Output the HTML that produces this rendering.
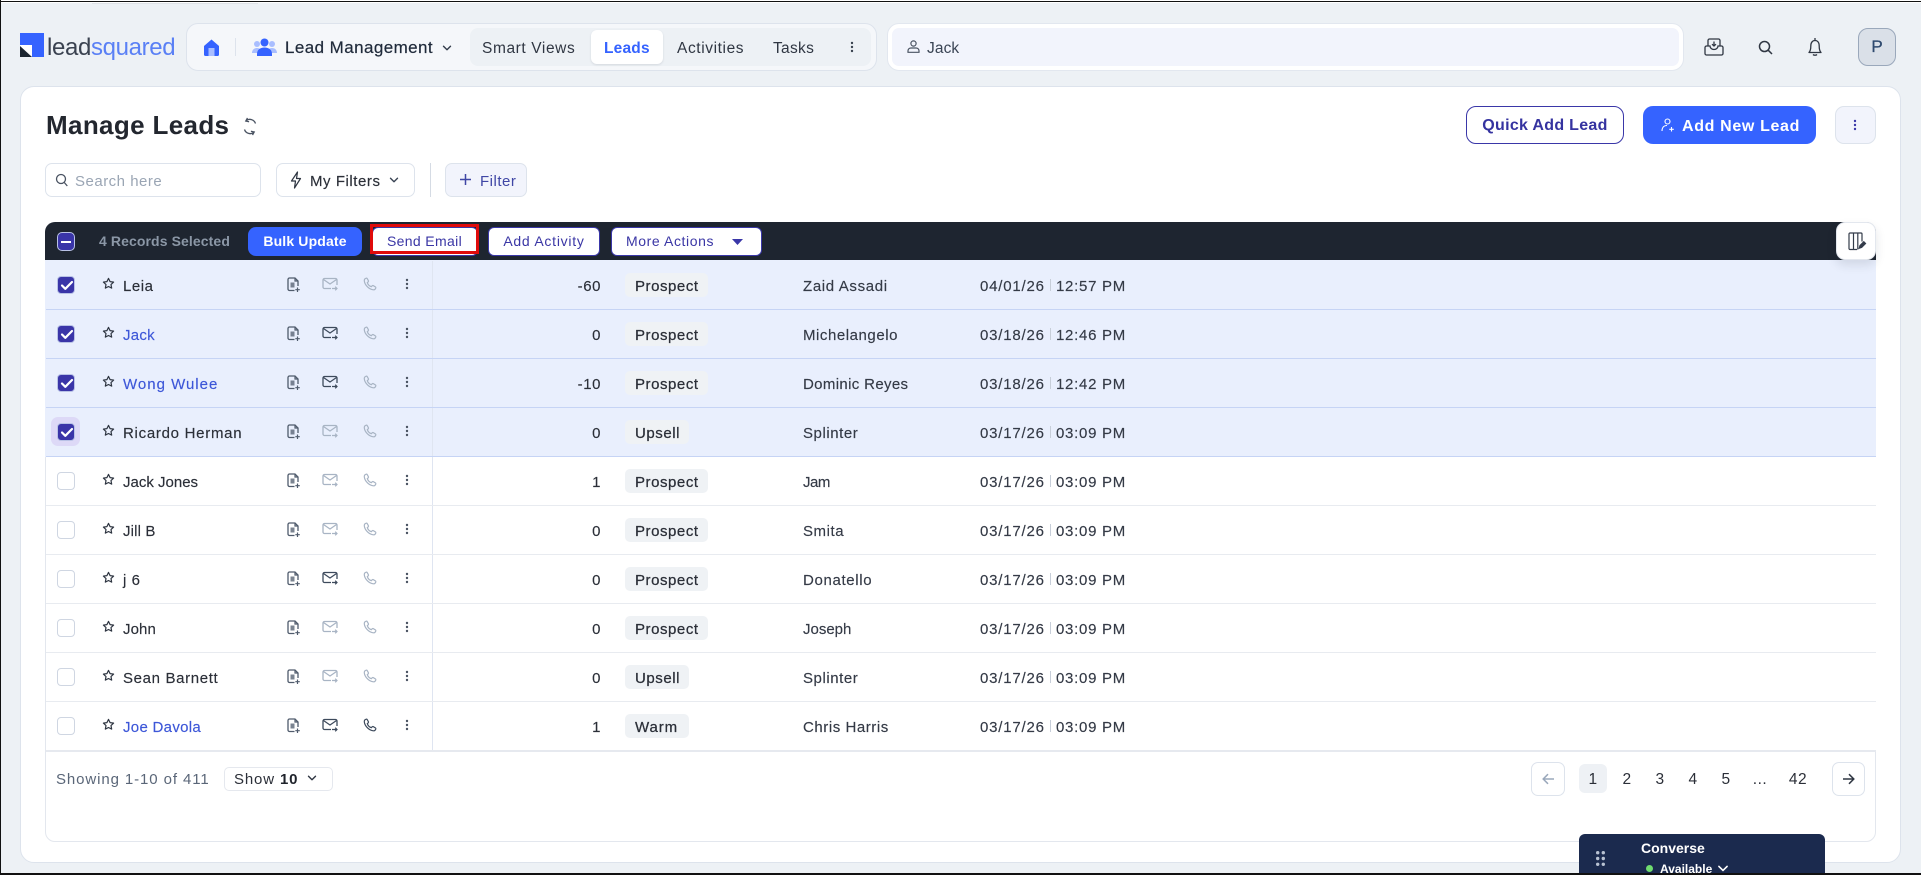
<!DOCTYPE html>
<html><head><meta charset="utf-8"><title>Manage Leads</title>
<style>
html,body{margin:0;padding:0;width:1921px;height:875px;overflow:hidden;background:#edf1f5}
body{position:relative;font-family:"Liberation Sans",sans-serif;color:#2b2f38}
div,span,svg{position:absolute;box-sizing:border-box}
.t{white-space:nowrap}
b{font-weight:700}
.r{left:46px;width:1830px;height:49px;background:#fff;border-bottom:1px solid #e8ebf0;box-shadow:-1px 0 0 #e3e7ee}
.s{background:#e9effd;border-bottom:1px solid #c6d4f5;box-shadow:-1px 0 0 #e9effd}
.r .t{top:2px;line-height:48px;font-size:15px;letter-spacing:.55px;-webkit-text-stroke:.15px currentColor}
.cb{left:11px;top:15px;width:18px;height:18px;border-radius:4px;background:#fff;border:1px solid #cfd6e2}
.s .cb,.cb.on{background:#3a35a8;border:1px solid #b9c2e6}
.cb svg{left:2px;top:3px}
.n{left:77px;color:#2b2f38}
.l{color:#3d57d8}
.sc{right:1275px;text-align:right}
.p{left:579px;top:12px;height:24px;border-radius:5px;background:#eff2f5;font-size:15px}
.p1{width:83px}.p2{width:64px}.p3{width:64px}
.r .pt{left:589px;color:#2b2f38;-webkit-text-stroke:.25px currentColor}
.o{left:757px;color:#343a46}
.r .d{left:934px;letter-spacing:.8px;color:#343a46}
.sep{left:1004px;top:18px;width:1px;height:12px;background:#c7ced9}
.r .tm{left:1010px;letter-spacing:.72px;color:#343a46}
.v{left:386px;top:0;width:1px;height:48px;background:#dfe5f1}
.i{top:16px}
.i.dt{top:17px}
.btn{border-radius:8px}
.pg{top:763px;line-height:34px;font-size:15.500px;width:30px;text-align:center;color:#2b2f38;letter-spacing:.5px}
</style></head>
<body>
<svg width="0" height="0" style="left:0;top:0">
<defs>
<symbol id="star" viewBox="0 0 14 14"><path d="M7 1.500l1.700 3.500 3.800.5-2.800 2.700.7 3.800L7 10.200 3.600 12l.7-3.800L1.500 5.500l3.800-.5z" fill="none" stroke="currentColor" stroke-width="1.300" stroke-linejoin="round"/></symbol>
<symbol id="doc" viewBox="0 0 16 16"><path d="M8.500 13.500H3.500a1.500 1.500 0 0 1-1.500-1.500V2.500A1.500 1.500 0 0 1 3.500 1h5.500l3 3v5" fill="none" stroke="currentColor" stroke-width="1.300"/><path d="M9 1v3h3M11.500 10.500v4.500M9.300 12.700h4.500" fill="none" stroke="currentColor" stroke-width="1.200"/><rect x="4.500" y="5.500" width="4" height="5" fill="currentColor" opacity=".75"/></symbol>
<symbol id="mail" viewBox="0 0 16 14"><path d="M9 11.500H2.500A1.500 1.500 0 0 1 1 10V3a1.500 1.500 0 0 1 1.500-1.500h11A1.500 1.500 0 0 1 15 3v5" fill="none" stroke="currentColor" stroke-width="1.300"/><path d="M1.500 2.500L8 7l6.500-4.500M10 11.500h5M13.200 9.700l1.800 1.800-1.800 1.800" fill="none" stroke="currentColor" stroke-width="1.200"/></symbol>
<symbol id="ph" viewBox="0 0 14 14"><path d="M3.200 1.200c-1 .3-2 1.300-1.900 2.600.4 4.200 4.700 8.600 8.900 9 1.300.1 2.300-.9 2.600-1.900.1-.4 0-.7-.3-.9L10.300 8.600c-.3-.2-.7-.1-1 .1l-1 1c-1.800-.6-3.400-2.200-4-4l1-1c.2-.3.3-.7.1-1L4.100 1.500c-.2-.3-.5-.4-.9-.3z" fill="none" stroke="currentColor" stroke-width="1.200"/></symbol>
<symbol id="dots" viewBox="0 0 4 12"><circle cx="2" cy="2" r="1.200" fill="currentColor"/><circle cx="2" cy="6" r="1.200" fill="currentColor"/><circle cx="2" cy="10" r="1.200" fill="currentColor"/></symbol>
<symbol id="chk" viewBox="0 0 14 11"><path d="M2 5.500l3.300 3.300L12 2" fill="none" stroke="#fff" stroke-width="2.200" stroke-linecap="round" stroke-linejoin="round"/></symbol>
<symbol id="chev" viewBox="0 0 10 6"><path d="M1.500 1.200L5 4.700l3.500-3.500" fill="none" stroke="currentColor" stroke-width="1.400" stroke-linecap="round" stroke-linejoin="round"/></symbol>
</defs></svg>

<div style="left:0;top:0;width:1921px;height:3px;background:#fff"></div>
<div style="left:0;top:1px;width:1921px;height:1px;background:#111"></div>
<div style="left:92px;top:3px;width:166px;height:1px;background:#dfe3e8"></div>
<div style="left:0;top:0;width:1px;height:875px;background:#111"></div>

<!-- logo -->
<div style="left:20px;top:33px;width:23.500px;height:24px;background:#3563ff"></div>
<div style="left:20px;top:45px;width:12px;height:12px;background:#fff"></div>
<svg style="left:20px;top:46px" width="12" height="11"><path d="M0 0L12 11H0z" fill="#1c2530"/></svg>
<div class="t" style="left:47px;top:30px;line-height:36px;font-size:24px;letter-spacing:-.35px;color:#3a4250">lead<span style="position:static;color:#5a80f5">squared</span></div>

<!-- nav -->
<div style="left:186px;top:23px;width:691px;height:48px;background:#f5f7fa;border:1px solid #dde3ec;border-radius:12px"></div>
<svg style="left:203px;top:39px" width="17" height="17" viewBox="0 0 17 17"><path d="M8.500 0.500L16 7v8.500a1.500 1.500 0 0 1-1.500 1.500h-12A1.500 1.500 0 0 1 1 15.500V7z" fill="#3563ff"/><rect x="5.500" y="9" width="6" height="8" fill="#a9beff"/></svg>
<div style="left:235px;top:38px;width:1px;height:18px;background:#dde3ec"></div>
<svg style="left:252px;top:38px" width="25" height="18" viewBox="0 0 25 18"><circle cx="5" cy="6" r="3" fill="#a9beff"/><circle cx="20" cy="6" r="3" fill="#a9beff"/><path d="M0 15c0-3 2-5 5-5s5 2 5 5zM15 15c0-3 2-5 5-5s5 2 5 5z" fill="#a9beff"/><circle cx="12.500" cy="4.500" r="4" fill="#3563ff"/><path d="M5 18v-2c0-4 3-6.500 7.500-6.500S20 12 20 16v2z" fill="#3563ff"/></svg>
<div class="t" style="left:285px;top:30px;line-height:36px;font-size:17px;letter-spacing:.42px;color:#1f2a3a;-webkit-text-stroke:.2px #1f2a3a">Lead Management</div>
<svg style="left:442px;top:45px;color:#333c4a" width="10" height="6"><use href="#chev"/></svg>
<div style="left:470px;top:28px;width:401px;height:38px;background:#edf1f5;border-radius:8px"></div>
<div style="left:591px;top:30px;width:72px;height:34px;background:#fff;border-radius:6px;box-shadow:0 1px 2px rgba(30,40,60,.12)"></div>
<div class="t" style="left:482px;top:31px;line-height:36px;font-size:15.500px;letter-spacing:.6px;color:#2f3642">Smart Views</div>
<div class="t" style="left:604px;top:31px;line-height:36px;font-size:15.500px;font-weight:700;letter-spacing:.2px;color:#3563ff">Leads</div>
<div class="t" style="left:677px;top:31px;line-height:36px;font-size:15.500px;letter-spacing:.6px;color:#2f3642">Activities</div>
<div class="t" style="left:773px;top:31px;line-height:36px;font-size:15.500px;letter-spacing:.3px;color:#2f3642">Tasks</div>
<svg style="left:850px;top:41px;color:#39424f" width="4" height="12"><use href="#dots"/></svg>

<!-- global search -->
<div style="left:887px;top:23px;width:797px;height:48px;background:#fff;border:1px solid #e2e7ef;border-radius:12px"></div>
<div style="left:892px;top:28px;width:787px;height:38px;background:#f2f4fc;border-radius:7px"></div>
<svg style="left:907px;top:40px" width="13" height="13" viewBox="0 0 13 13"><circle cx="6.500" cy="3.500" r="2.600" fill="none" stroke="#4a5362" stroke-width="1.200"/><path d="M1 12.300v-1.300c0-2 1.500-3 3-3h5c1.500 0 3 1 3 3v1.300z" fill="none" stroke="#4a5362" stroke-width="1.200"/></svg>
<div class="t" style="left:927px;top:31px;line-height:36px;font-size:15.500px;letter-spacing:.1px;color:#3a4454">Jack</div>

<!-- top right icons -->
<svg style="left:1704px;top:38px" width="20" height="18" viewBox="0 0 20 18" fill="none" stroke="#2f3642" stroke-width="1.300"><path d="M4 8V2.500A1.500 1.500 0 0 1 5.500 1h9A1.500 1.500 0 0 1 16 2.500V8"/><path d="M1 9.500A1.500 1.500 0 0 1 2.500 8H6c0 2 1.800 3.500 4 3.500S14 10 14 8h3.500A1.500 1.500 0 0 1 19 9.500v6a1.500 1.500 0 0 1-1.500 1.500h-15A1.500 1.500 0 0 1 1 15.500z"/><path d="M10 3.500v4.500M8 6.200L10 8l2-1.800"/></svg>
<svg style="left:1758px;top:40px" width="15" height="15" viewBox="0 0 15 15" fill="none" stroke="#2f3642" stroke-width="1.500"><circle cx="6.500" cy="6.500" r="5"/><path d="M10.300 10.300L14 14"/></svg>
<svg style="left:1807px;top:37px" width="16" height="20" viewBox="0 0 16 20" fill="none" stroke="#2f3642" stroke-width="1.300"><path d="M8 1v2M2 15.500c1.500-1.500 1.800-3 1.800-6.500C3.800 5.500 5.500 3.500 8 3.500s4.200 2 4.200 5.500c0 3.500.3 5 1.800 6.500z" stroke-linejoin="round"/><path d="M6 17.500c1 1 3 1 4 0"/></svg>
<div class="t" style="left:1858px;top:28px;width:38px;height:38px;background:#dae0e8;border:1px solid #9aa8bb;border-radius:10px;text-align:center;line-height:36px;font-size:17px;color:#2f4a6f;-webkit-text-stroke:.3px #2f4a6f">P</div>

<!-- card -->
<div style="left:20px;top:86px;width:1881px;height:777px;background:#fff;border:1px solid #dde3ec;border-radius:14px"></div>
<div class="t" style="left:46px;top:105px;line-height:40px;font-size:26px;font-weight:700;letter-spacing:.35px;color:#23272f">Manage Leads</div>
<svg style="left:242px;top:117px" width="16" height="19" viewBox="0 0 16 19" fill="none" stroke="#4a5362" stroke-width="1.300"><path d="M13.500 6.500A6 6 0 0 0 4 3.700M2.500 12.500A6 6 0 0 0 12 15.300"/><path d="M5.500 1L3.800 4l3.300.7M10.500 18l1.700-3-3.300-.7"/></svg>

<div class="t" style="left:1466px;top:106px;width:158px;height:38px;border:1px solid #3a37a8;border-radius:10px;text-align:center;line-height:38px;font-size:16px;font-weight:700;letter-spacing:.3px;color:#3533a0">Quick Add Lead</div>
<div style="left:1643px;top:106px;width:173px;height:38px;background:#3563ff;border-radius:10px"></div>
<svg style="left:1661px;top:118px" width="14" height="14" viewBox="0 0 14 14" fill="none" stroke="#fff" stroke-width="1.100"><circle cx="6.500" cy="3.500" r="2.500"/><path d="M1 13c0-3.500 2-5.500 5-5.500M10.500 9v4.500M8.300 11.300h4.500"/></svg>
<div class="t" style="left:1682px;top:108px;line-height:38px;font-size:16px;font-weight:700;letter-spacing:.65px;color:#fff">Add New Lead</div>
<div style="left:1835px;top:106px;width:41px;height:38px;background:#f2f4fc;border:1px solid #dde3ec;border-radius:9px"></div>
<svg style="left:1853px;top:119px;color:#3a37a8" width="4" height="12"><use href="#dots"/></svg>

<!-- filters -->
<div style="left:45px;top:163px;width:216px;height:34px;background:#fff;border:1px solid #dde3ec;border-radius:7px"></div>
<svg style="left:55px;top:173px" width="13" height="14" viewBox="0 0 13 14" fill="none" stroke="#4a5362" stroke-width="1.300"><circle cx="6" cy="6" r="4.500"/><path d="M9.300 9.500l3 3.500"/></svg>
<div class="t" style="left:75px;top:165px;line-height:34px;font-size:15px;letter-spacing:.5px;color:#9aa5b4">Search here</div>
<div style="left:276px;top:163px;width:139px;height:34px;background:#fff;border:1px solid #dde3ec;border-radius:7px"></div>
<svg style="left:290px;top:171px" width="12" height="18" viewBox="0 0 12 18" fill="none" stroke="#2f3642" stroke-width="1.200" stroke-linejoin="round"><path d="M7.500 1L1.500 10h4l-1 7 6-9.500h-4z"/></svg>
<div class="t" style="left:310px;top:165px;line-height:34px;font-size:15px;letter-spacing:.55px;color:#2b2f38;-webkit-text-stroke:.15px #2b2f38">My Filters</div>
<svg style="left:389px;top:177px;color:#3a4454" width="10" height="6"><use href="#chev"/></svg>
<div style="left:430px;top:163px;width:1px;height:34px;background:#d5dbe4"></div>
<div style="left:445px;top:163px;width:82px;height:34px;background:#f2f4fc;border:1px solid #dde3ec;border-radius:7px"></div>
<svg style="left:459px;top:173px" width="13" height="13" fill="none" stroke="#3f46a5" stroke-width="1.500"><path d="M6.500 1v11M1 6.500h11"/></svg>
<div class="t" style="left:480px;top:165px;line-height:34px;font-size:15px;letter-spacing:.5px;color:#3f46a5">Filter</div>

<!-- table -->
<div style="left:45px;top:222px;width:1831px;height:620px;background:#fff;border:1px solid #e3e7ee;border-radius:10px"></div>
<div style="left:45px;top:222px;width:1831px;height:38px;background:#1e2530;border-radius:10px 10px 0 0"></div>
<div style="left:45px;top:260px;width:1831px;height:1px;background:#e9effd"></div>
<div style="left:57px;top:232px;width:18px;height:19px;background:#3a35a8;border:1px solid #b9c2e6;border-radius:5px"></div>
<div style="left:61px;top:240.500px;width:10px;height:2px;background:#fff"></div>
<div class="t" style="left:99px;top:222px;line-height:38px;font-size:14px;font-weight:700;letter-spacing:.1px;color:#8b97a6">4 Records Selected</div>
<div class="t" style="left:248px;top:227px;width:114px;height:29px;background:#3563ff;border-radius:8px;text-align:center;line-height:29px;font-size:14px;font-weight:700;letter-spacing:.15px;color:#fff">Bulk Update</div>
<div style="left:372px;top:227px;width:106px;height:29px;background:#fff;border:1px solid #3a37a8;border-radius:6px"></div>
<div class="t" style="left:370px;top:224px;width:109px;height:30px;border:3px solid #e00b0b;text-align:center;line-height:28px;font-size:14px;letter-spacing:.35px;color:#3a36a5">Send Email</div>
<div class="t" style="left:488px;top:227px;width:112px;height:29px;background:#fff;border:1px solid #3a37a8;border-radius:6px;text-align:center;line-height:27px;font-size:14px;letter-spacing:.75px;color:#3a36a5">Add Activity</div>
<div style="left:611px;top:227px;width:151px;height:29px;background:#fff;border:1px solid #3a37a8;border-radius:6px"></div>
<div class="t" style="left:626px;top:227px;line-height:29px;font-size:14px;letter-spacing:.6px;color:#3a36a5">More Actions</div>
<svg style="left:732px;top:239px" width="11" height="6"><path d="M0 0h11L5.500 6z" fill="#3a37a8"/></svg>

<!-- rows -->
<div class="r s" style="top:261px"><div class="cb"><svg width="14" height="11"><use href="#chk"/></svg></div><svg class="i" style="left:56px;color:#2f3642" width="13" height="13"><use href="#star"/></svg><div class="t n">Leia</div><svg class="i" style="left:240px;color:#4f5b6c" width="16" height="16"><use href="#doc"/></svg><svg class="i" style="left:276px;color:#a8b4c4" width="16" height="14"><use href="#mail"/></svg><svg class="i" style="left:317px;color:#a8b4c4" width="14" height="14"><use href="#ph"/></svg><svg class="i dt" style="left:359px;color:#4a5362" width="4" height="12"><use href="#dots"/></svg><div class="v"></div><div class="t sc">-60</div><div class="p p1"></div><div class="t pt">Prospect</div><div class="t o" style="letter-spacing:.65px">Zaid Assadi</div><div class="t d">04/01/26</div><div class="sep"></div><div class="t tm">12:57 PM</div></div>

<div class="r s" style="top:310px"><div class="cb"><svg width="14" height="11"><use href="#chk"/></svg></div><svg class="i" style="left:56px;color:#2f3642" width="13" height="13"><use href="#star"/></svg><div class="t n l" style="letter-spacing:.25px">Jack</div><svg class="i" style="left:240px;color:#4f5b6c" width="16" height="16"><use href="#doc"/></svg><svg class="i" style="left:276px;color:#3d4a5c" width="16" height="14"><use href="#mail"/></svg><svg class="i" style="left:317px;color:#a8b4c4" width="14" height="14"><use href="#ph"/></svg><svg class="i dt" style="left:359px;color:#4a5362" width="4" height="12"><use href="#dots"/></svg><div class="v"></div><div class="t sc">0</div><div class="p p1"></div><div class="t pt">Prospect</div><div class="t o">Michelangelo</div><div class="t d">03/18/26</div><div class="sep"></div><div class="t tm">12:46 PM</div></div>

<div class="r s" style="top:359px"><div class="cb"><svg width="14" height="11"><use href="#chk"/></svg></div><svg class="i" style="left:56px;color:#2f3642" width="13" height="13"><use href="#star"/></svg><div class="t n l" style="letter-spacing:1px">Wong Wulee</div><svg class="i" style="left:240px;color:#4f5b6c" width="16" height="16"><use href="#doc"/></svg><svg class="i" style="left:276px;color:#3d4a5c" width="16" height="14"><use href="#mail"/></svg><svg class="i" style="left:317px;color:#a8b4c4" width="14" height="14"><use href="#ph"/></svg><svg class="i dt" style="left:359px;color:#4a5362" width="4" height="12"><use href="#dots"/></svg><div class="v"></div><div class="t sc">-10</div><div class="p p1"></div><div class="t pt">Prospect</div><div class="t o" style="letter-spacing:.35px">Dominic Reyes</div><div class="t d">03/18/26</div><div class="sep"></div><div class="t tm">12:42 PM</div></div>

<div class="r s" style="top:408px"><div style="left:5px;top:9px;width:29px;height:29px;background:#ddd9f7;border-radius:7px"></div><div class="cb"><svg width="14" height="11"><use href="#chk"/></svg></div><svg class="i" style="left:56px;color:#2f3642" width="13" height="13"><use href="#star"/></svg><div class="t n" style="letter-spacing:.72px">Ricardo Herman</div><svg class="i" style="left:240px;color:#4f5b6c" width="16" height="16"><use href="#doc"/></svg><svg class="i" style="left:276px;color:#a8b4c4" width="16" height="14"><use href="#mail"/></svg><svg class="i" style="left:317px;color:#a8b4c4" width="14" height="14"><use href="#ph"/></svg><svg class="i dt" style="left:359px;color:#4a5362" width="4" height="12"><use href="#dots"/></svg><div class="v"></div><div class="t sc">0</div><div class="p p3"></div><div class="t pt">Upsell</div><div class="t o">Splinter</div><div class="t d">03/17/26</div><div class="sep"></div><div class="t tm">03:09 PM</div></div>

<div class="r" style="top:457px"><div class="cb"></div><svg class="i" style="left:56px;color:#2f3642" width="13" height="13"><use href="#star"/></svg><div class="t n" style="letter-spacing:0">Jack Jones</div><svg class="i" style="left:240px;color:#4f5b6c" width="16" height="16"><use href="#doc"/></svg><svg class="i" style="left:276px;color:#a8b4c4" width="16" height="14"><use href="#mail"/></svg><svg class="i" style="left:317px;color:#a8b4c4" width="14" height="14"><use href="#ph"/></svg><svg class="i dt" style="left:359px;color:#4a5362" width="4" height="12"><use href="#dots"/></svg><div class="v"></div><div class="t sc">1</div><div class="p p1"></div><div class="t pt">Prospect</div><div class="t o" style="letter-spacing:-.5px">Jam</div><div class="t d">03/17/26</div><div class="sep"></div><div class="t tm">03:09 PM</div></div>

<div class="r" style="top:506px"><div class="cb"></div><svg class="i" style="left:56px;color:#2f3642" width="13" height="13"><use href="#star"/></svg><div class="t n" style="letter-spacing:.15px">Jill B</div><svg class="i" style="left:240px;color:#4f5b6c" width="16" height="16"><use href="#doc"/></svg><svg class="i" style="left:276px;color:#a8b4c4" width="16" height="14"><use href="#mail"/></svg><svg class="i" style="left:317px;color:#a8b4c4" width="14" height="14"><use href="#ph"/></svg><svg class="i dt" style="left:359px;color:#4a5362" width="4" height="12"><use href="#dots"/></svg><div class="v"></div><div class="t sc">0</div><div class="p p1"></div><div class="t pt">Prospect</div><div class="t o">Smita</div><div class="t d">03/17/26</div><div class="sep"></div><div class="t tm">03:09 PM</div></div>

<div class="r" style="top:555px"><div class="cb"></div><svg class="i" style="left:56px;color:#2f3642" width="13" height="13"><use href="#star"/></svg><div class="t n">j 6</div><svg class="i" style="left:240px;color:#4f5b6c" width="16" height="16"><use href="#doc"/></svg><svg class="i" style="left:276px;color:#3d4a5c" width="16" height="14"><use href="#mail"/></svg><svg class="i" style="left:317px;color:#a8b4c4" width="14" height="14"><use href="#ph"/></svg><svg class="i dt" style="left:359px;color:#4a5362" width="4" height="12"><use href="#dots"/></svg><div class="v"></div><div class="t sc">0</div><div class="p p1"></div><div class="t pt">Prospect</div><div class="t o" style="letter-spacing:.65px">Donatello</div><div class="t d">03/17/26</div><div class="sep"></div><div class="t tm">03:09 PM</div></div>

<div class="r" style="top:604px"><div class="cb"></div><svg class="i" style="left:56px;color:#2f3642" width="13" height="13"><use href="#star"/></svg><div class="t n" style="letter-spacing:.1px">John</div><svg class="i" style="left:240px;color:#4f5b6c" width="16" height="16"><use href="#doc"/></svg><svg class="i" style="left:276px;color:#a8b4c4" width="16" height="14"><use href="#mail"/></svg><svg class="i" style="left:317px;color:#a8b4c4" width="14" height="14"><use href="#ph"/></svg><svg class="i dt" style="left:359px;color:#4a5362" width="4" height="12"><use href="#dots"/></svg><div class="v"></div><div class="t sc">0</div><div class="p p1"></div><div class="t pt">Prospect</div><div class="t o" style="letter-spacing:0">Joseph</div><div class="t d">03/17/26</div><div class="sep"></div><div class="t tm">03:09 PM</div></div>

<div class="r" style="top:653px"><div class="cb"></div><svg class="i" style="left:56px;color:#2f3642" width="13" height="13"><use href="#star"/></svg><div class="t n" style="letter-spacing:.65px">Sean Barnett</div><svg class="i" style="left:240px;color:#4f5b6c" width="16" height="16"><use href="#doc"/></svg><svg class="i" style="left:276px;color:#a8b4c4" width="16" height="14"><use href="#mail"/></svg><svg class="i" style="left:317px;color:#a8b4c4" width="14" height="14"><use href="#ph"/></svg><svg class="i dt" style="left:359px;color:#4a5362" width="4" height="12"><use href="#dots"/></svg><div class="v"></div><div class="t sc">0</div><div class="p p2"></div><div class="t pt">Upsell</div><div class="t o">Splinter</div><div class="t d">03/17/26</div><div class="sep"></div><div class="t tm">03:09 PM</div></div>

<div class="r" style="top:702px;border-bottom:2px solid #e6e9ef;height:50px"><div class="cb"></div><svg class="i" style="left:56px;color:#2f3642" width="13" height="13"><use href="#star"/></svg><div class="t n l" style="letter-spacing:.3px">Joe Davola</div><svg class="i" style="left:240px;color:#4f5b6c" width="16" height="16"><use href="#doc"/></svg><svg class="i" style="left:276px;color:#3d4a5c" width="16" height="14"><use href="#mail"/></svg><svg class="i" style="left:317px;color:#3d4a5c" width="14" height="14"><use href="#ph"/></svg><svg class="i dt" style="left:359px;color:#4a5362" width="4" height="12"><use href="#dots"/></svg><div class="v"></div><div class="t sc">1</div><div class="p p3"></div><div class="t pt" style="letter-spacing:.9px">Warm</div><div class="t o">Chris Harris</div><div class="t d">03/17/26</div><div class="sep"></div><div class="t tm">03:09 PM</div></div>

<!-- column edit -->
<div style="left:1836px;top:222px;width:40px;height:38px;background:#fff;border:1px solid #e3e7ee;border-radius:9px;box-shadow:0 5px 10px rgba(30,40,60,.12)"></div>
<svg style="left:1848px;top:232px" width="19" height="19" viewBox="0 0 19 19" fill="none" stroke="#343c4a" stroke-width="1.200"><path d="M9 17.500H2a1 1 0 0 1-1-1V2a1 1 0 0 1 1-1h11a1 1 0 0 1 1 1v7.500M5.500 1v16.500M9.800 1v16.500"/><path d="M11 16.500l.8-3 4-4 2 2-4 4z" fill="#343c4a" stroke-width=".8"/></svg>

<!-- footer -->
<div class="t" style="left:56px;top:765px;line-height:30px;font-size:15px;letter-spacing:.9px;color:#5a6678">Showing 1-10 of 411</div>
<div style="left:224px;top:767px;width:109px;height:24px;background:#fff;border:1px solid #e5e8ee;border-radius:5px"></div>
<div class="t" style="left:234px;top:766px;line-height:28px;font-size:15px;letter-spacing:.85px;color:#2b2f38">Show <b style="color:#1f232b">10</b></div>
<svg style="left:307px;top:775px;color:#2f3642" width="10" height="6"><use href="#chev"/></svg>

<div style="left:1531px;top:762px;width:34px;height:34px;background:#fff;border:1px solid #dde3ec;border-radius:7px"></div>
<svg style="left:1542px;top:773px" width="13" height="12" fill="none" stroke="#9aa8bb" stroke-width="1.500"><path d="M12 6H1.500M6 1.200L1.200 6 6 10.800"/></svg>
<div style="left:1579px;top:764px;width:28px;height:29px;background:#eef1f5;border-radius:6px"></div>
<div class="pg" style="left:1578px">1</div>
<div class="pg" style="left:1612px">2</div>
<div class="pg" style="left:1645px">3</div>
<div class="pg" style="left:1678px">4</div>
<div class="pg" style="left:1711px">5</div>
<div class="pg" style="left:1745px">...</div>
<div class="pg" style="left:1783px">42</div>
<div style="left:1832px;top:762px;width:33px;height:34px;background:#fff;border:1px solid #dde3ec;border-radius:7px"></div>
<svg style="left:1842px;top:773px" width="13" height="12" fill="none" stroke="#2f3642" stroke-width="1.500"><path d="M1 6h10.500M7 1.200L11.800 6 7 10.800"/></svg>

<!-- converse -->
<div style="left:1579px;top:834px;width:246px;height:41px;background:#1b2a4e;border-radius:6px 6px 0 0"></div>
<svg style="left:1596px;top:851px" width="9" height="15" fill="#b9c2d2"><circle cx="1.700" cy="1.700" r="1.700"/><circle cx="7.300" cy="1.700" r="1.700"/><circle cx="1.700" cy="7.500" r="1.700"/><circle cx="7.300" cy="7.500" r="1.700"/><circle cx="1.700" cy="13.300" r="1.700"/><circle cx="7.300" cy="13.300" r="1.700"/></svg>
<div class="t" style="left:1641px;top:838px;line-height:20px;font-size:14px;font-weight:700;color:#fff">Converse</div>
<div style="left:1646px;top:865px;width:7px;height:7px;border-radius:50%;background:#6fdc6f"></div>
<div class="t" style="left:1660px;top:860px;line-height:18px;font-size:12px;font-weight:700;color:#fff">Available</div>
<svg style="left:1717px;top:865px;color:#fff" width="12" height="7" viewBox="0 0 10 6"><use href="#chev"/></svg>
<div style="left:0;top:873px;width:1921px;height:2px;background:#111"></div>
</body></html>
